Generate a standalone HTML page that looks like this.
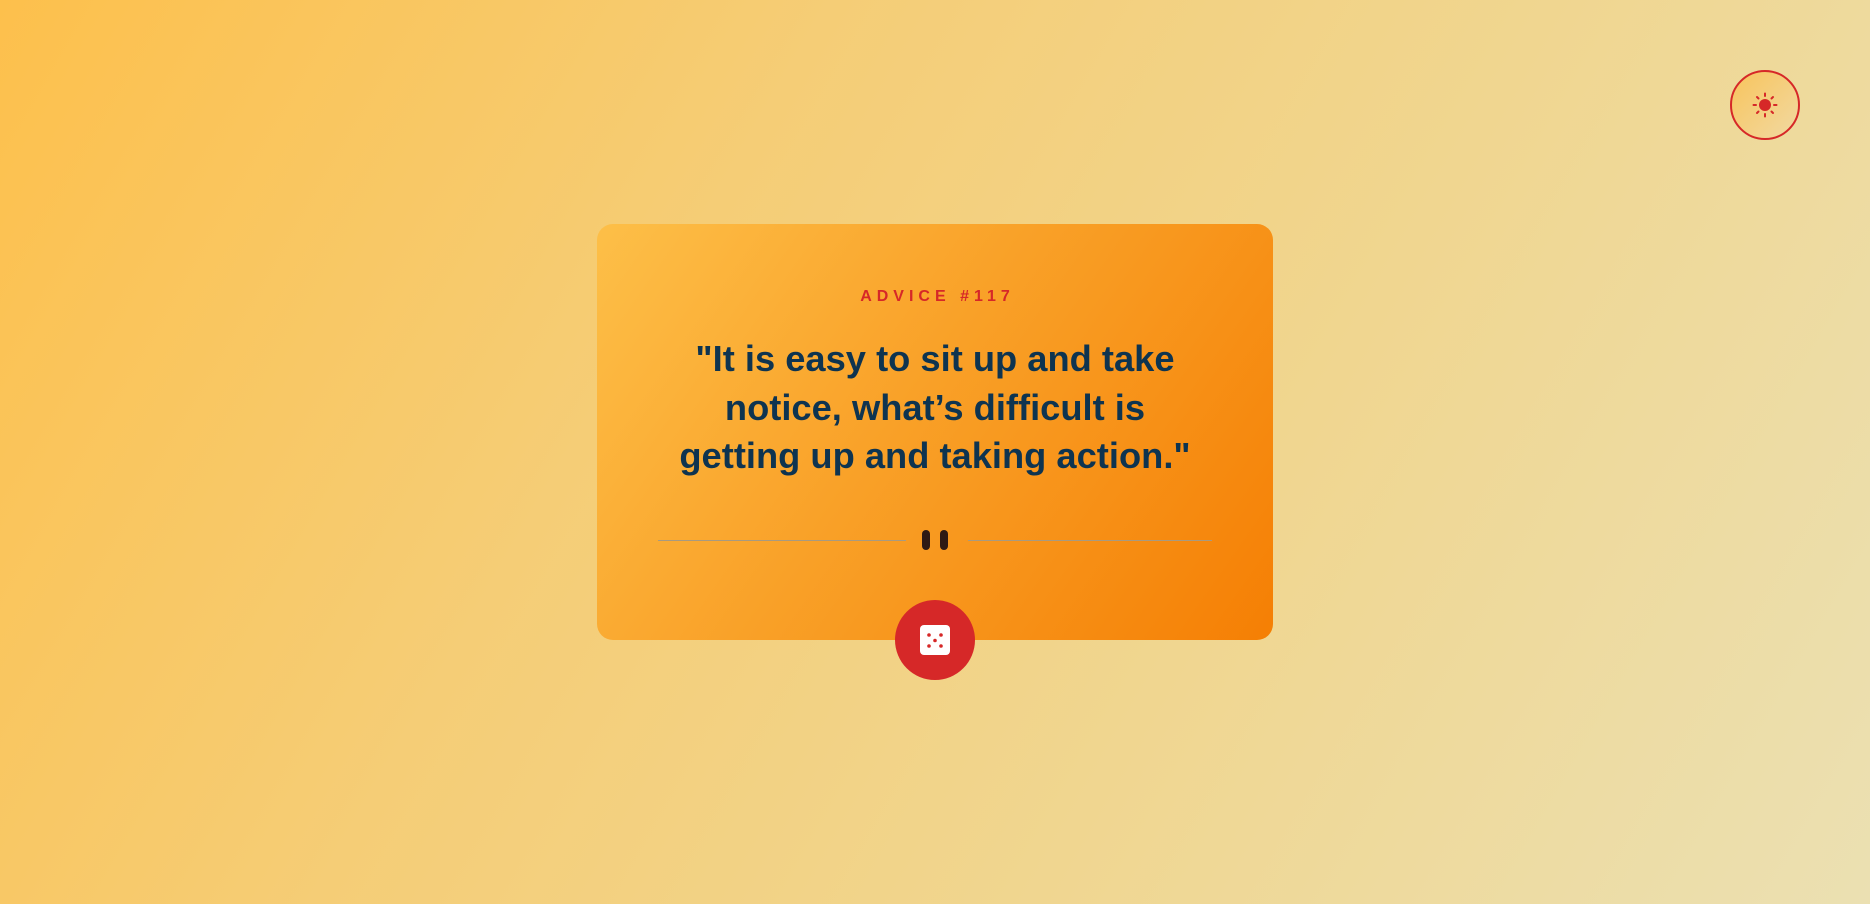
<!DOCTYPE html>
<html><head><meta charset="utf-8"><style>
*{margin:0;padding:0;box-sizing:border-box}
html,body{width:1870px;height:904px;overflow:hidden}
body{background:linear-gradient(120deg,#fdc04c 0%,#f5cd76 35%,#f0d690 65%,#ebe0b2 100%);font-family:"Liberation Sans",sans-serif;position:relative}
.sun{position:absolute;left:1730px;top:70px;width:70px;height:70px;border-radius:50%;border:2px solid #d62828;background:linear-gradient(135deg,#f8c45c,#f1d9a2)}
.card{position:absolute;left:597px;top:224px;width:676px;height:416px;border-radius:16px;background:linear-gradient(125deg,#fdbf48 0%,#f9a128 45%,#f57f04 100%)}
.label{position:absolute;top:288px;left:0;width:100%;text-align:center;color:#d62828;font-size:16px;font-weight:bold;letter-spacing:5px;padding-left:5px}
.quote{position:absolute;top:335px;left:0;width:100%;text-align:center;color:#0e3450;font-size:36.3px;font-weight:bold;line-height:48.5px}
.line{position:absolute;top:540px;height:1px;background:#a89a80}
.bar{position:absolute;top:530px;width:8px;height:20px;border-radius:4px;background:#2e1a14}
.dice{position:absolute;left:895px;top:600px;width:80px;height:80px;border-radius:50%;background:#d62828}
</style></head><body>
<div class="sun"><svg width="66" height="66" viewBox="0 0 66 66"><g stroke="#d62828" stroke-width="2" stroke-linecap="round"><line x1="33" y1="21.5" x2="33" y2="24"/><line x1="33" y1="42" x2="33" y2="44.5"/><line x1="21.5" y1="33" x2="24" y2="33"/><line x1="42" y1="33" x2="44.5" y2="33"/><line x1="25" y1="25" x2="26.5" y2="26.5"/><line x1="39.5" y1="39.5" x2="41" y2="41"/><line x1="25" y1="41" x2="26.5" y2="39.5"/><line x1="39.5" y1="26.5" x2="41" y2="25"/></g><circle cx="33" cy="33" r="6" fill="#d62828"/></svg></div>
<div class="card"></div>
<div class="label">ADVICE #117</div>
<div class="quote">"It is easy to sit up and take<br>notice, what’s difficult is<br>getting up and taking action."</div>
<div class="line" style="left:658px;width:248px"></div>
<div class="line" style="left:968px;width:244px"></div>
<div class="bar" style="left:922px"></div>
<div class="bar" style="left:940px"></div>
<div class="dice"><svg width="80" height="80" viewBox="0 0 80 80"><rect x="25" y="25" width="30" height="30" rx="4" fill="#fff"/><g fill="#d62828"><circle cx="34" cy="35" r="1.8"/><circle cx="46" cy="35" r="1.8"/><circle cx="40" cy="40.5" r="1.8"/><circle cx="34" cy="46" r="1.8"/><circle cx="46" cy="46" r="1.8"/></g></svg></div>
</body></html>
